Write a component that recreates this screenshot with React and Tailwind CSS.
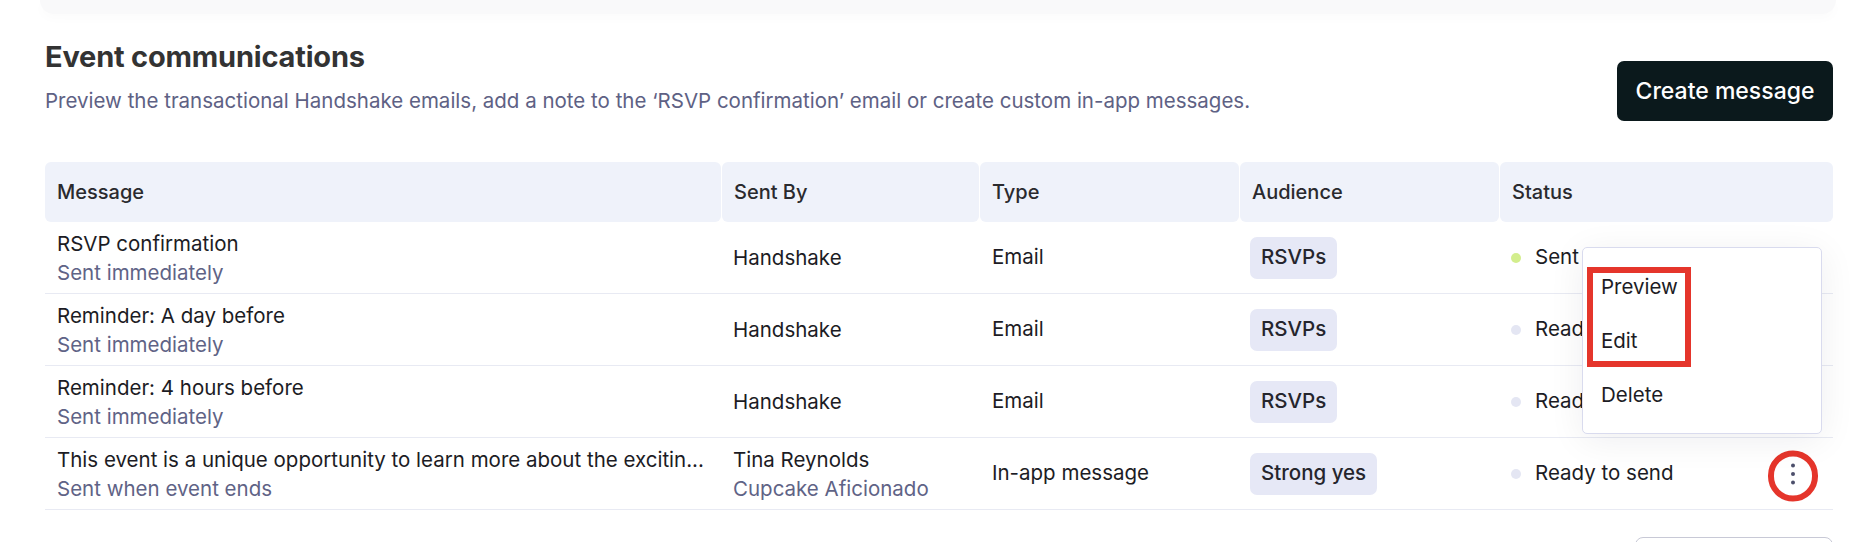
import React from 'react';

const rows = [
  { title: 'RSVP confirmation', sub: 'Sent immediately', by: 'Handshake', type: 'Email', audience: 'RSVPs', status: 'Sent', sent: true },
  { title: 'Reminder: A day before', sub: 'Sent immediately', by: 'Handshake', type: 'Email', audience: 'RSVPs', status: 'Ready to send' },
  { title: 'Reminder: 4 hours before', sub: 'Sent immediately', by: 'Handshake', type: 'Email', audience: 'RSVPs', status: 'Ready to send' },
  {
    title: 'This event is a unique opportunity to learn more about the excitin...',
    sub: 'Sent when event ends',
    by: 'Tina Reynolds',
    byRole: 'Cupcake Aficionado',
    type: 'In-app message',
    audience: 'Strong yes',
    status: 'Ready to send',
    open: true,
  },
];

const cols = 'grid grid-cols-[677px_258px_260px_260px_333px]';

function Kebab() {
  return (
    <svg width="8" height="26" viewBox="0 0 8 26" className="text-[#4c4f6b]">
      <circle cx="4" cy="4.5" r="2" fill="currentColor" />
      <circle cx="4" cy="13" r="2" fill="currentColor" />
      <circle cx="4" cy="21.5" r="2" fill="currentColor" />
    </svg>
  );
}

export default function App() {
  return (
    <div className="min-h-screen bg-white font-['Inter','Noto_Sans',sans-serif] text-[20.5px] text-[#1c1c24]">
      {/* bottom edge of the card above */}
      <div className="mx-[40px] h-[14px] rounded-b-[28px] bg-[#f9f9fa] shadow-[0_4px_12px_rgba(0,0,0,0.02)]"></div>

      <div className="pl-[45px] pr-[43px]">
        {/* HEADER */}
        <div className="flex justify-between items-start mt-[25px]">
          <div>
            <h2 className="text-[29px] leading-[36px] font-bold text-[#333333] tracking-[-0.2px]">Event communications</h2>
            <p className="mt-[12px] leading-[28px] text-[#5e6184]">
              Preview the transactional Handshake emails, add a note to the ‘RSVP confirmation’ email or create custom in-app messages.
            </p>
          </div>
          <button className="mt-[22px] h-[60px] w-[216px] rounded-[7px] bg-[#0b191c] text-white text-[23px] font-medium">
            Create message
          </button>
        </div>

        {/* TABLE */}
        <div className="relative mt-[41px]">
          <div className={`${cols} h-[60px]`}>
            {['Message', 'Sent By', 'Type', 'Audience', 'Status'].map((h, i) => (
              <div key={h} className={`h-full ${i < 4 ? 'pr-px' : ''}`}>
                <div className="h-full rounded-[6px] bg-[#eff2fa] px-3 flex items-center font-medium text-[20px] text-[#2a2a2e]">
                  {h}
                </div>
              </div>
            ))}
          </div>

          {rows.map((r) => (
            <div key={r.title} className={`${cols} h-[72px] border-b border-[#e8eaf3] items-center`}>
              <div className="px-3 min-w-0 leading-[29px]">
                <div className="whitespace-nowrap">{r.title}</div>
                <div className="text-[#5f6386]">{r.sub}</div>
              </div>
              <div className="px-[11px] leading-[29px]">
                <div>{r.by}</div>
                {r.byRole && <div className="text-[#5f6386]">{r.byRole}</div>}
              </div>
              <div className="px-3">{r.type}</div>
              <div className="px-[10px]">
                <span className="inline-flex items-center h-[42px] px-[11px] rounded-[7px] bg-[#e6e8f6] font-medium text-[#25252d]">
                  {r.audience}
                </span>
              </div>
              <div className="pl-[11px] pr-[36px] flex items-center">
                <span className={`w-[10px] h-[10px] rounded-full shrink-0 ${r.sent ? 'bg-[#d3ee8d]' : 'bg-[#e4e6f3]'}`}></span>
                <span className="ml-[14px] whitespace-nowrap">{r.status}</span>
                <span className="ml-auto relative flex items-center justify-center">
                  <Kebab />
                  {r.open && (
                    <span className="absolute left-1/2 top-1/2 -translate-x-1/2 -translate-y-[46%] w-[50px] h-[51px] rounded-full border-[6px] border-[#e5352b]"></span>
                  )}
                </span>
              </div>
            </div>
          ))}

          {/* open action menu */}
          <div className="absolute left-[1537px] top-[85px] w-[240px] h-[187px] rounded-[5px] border border-[#d9dbee] bg-white shadow-[0_6px_36px_rgba(20,20,40,0.07)] py-[12px]">
            <div className="h-[54px] px-[18px] flex items-center">Preview</div>
            <div className="h-[54px] px-[18px] flex items-center">Edit</div>
            <div className="h-[54px] px-[18px] flex items-center">Delete</div>
            <div className="absolute left-[4px] top-[19px] w-[104px] h-[100px] border-[6px] border-[#e5352b]"></div>
          </div>
        </div>

        <div className="flex justify-end mt-[27px]">
          <div className="w-[198px] h-[40px] rounded-[8px] border border-[#c8c9d6]"></div>
        </div>
      </div>
    </div>
  );
}
